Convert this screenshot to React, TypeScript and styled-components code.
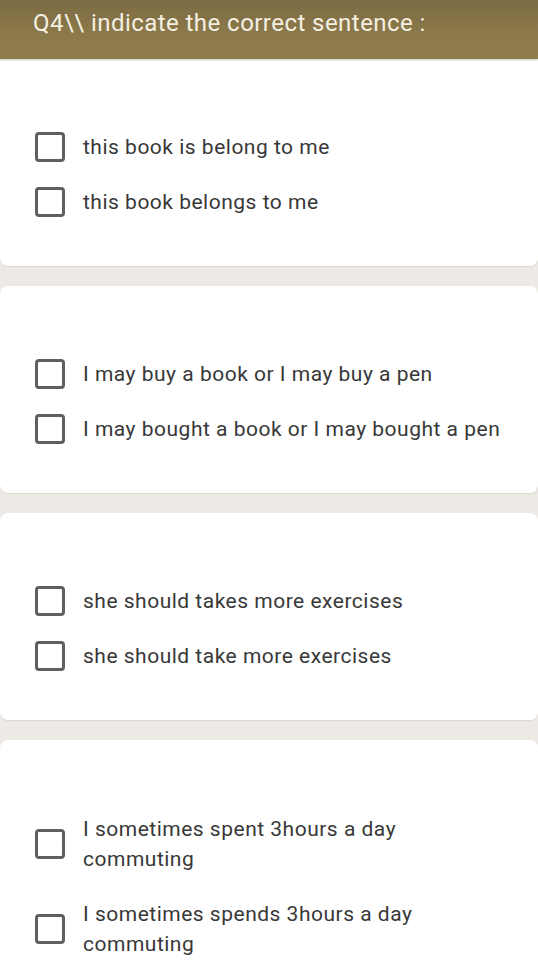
import React from 'react';
import styled, { createGlobalStyle } from 'styled-components';

const GlobalStyle = createGlobalStyle`
  html, body {
    margin: 0;
    padding: 0;
    background: #ede9e4;
    font-family: Roboto, 'Liberation Sans', sans-serif;
  }
`;

const Page = styled.div`
  width: 538px;
  height: 970px;
  overflow: hidden;
  display: flex;
  flex-direction: column;
  gap: 20px;
  background: #ede9e4;
`;

const Header = styled.div`
  height: 59px;
  flex-shrink: 0;
  box-sizing: border-box;
  padding: 8px 33px 0;
  background: linear-gradient(180deg, #7c6b43 0%, #8c7a4b 60%, #8f7d4d 100%);
  color: #f4f0e2;
  font-size: 24px;
  line-height: 30px;
  letter-spacing: 0.45px;
  box-shadow: 0 1px 2px rgba(0, 0, 0, 0.25);
  position: relative;
  z-index: 1;
  margin-bottom: -20px;
`;

const Card = styled.div<{ $tall?: boolean }>`
  background: #ffffff;
  border-radius: 8px;
  box-shadow: 0 1px 1px rgba(0, 0, 0, 0.08);
  padding: ${(p) => (p.$tall ? '74px 0 40px' : '73px 0 49px')};
  display: flex;
  flex-direction: column;
  gap: 25px;
  flex-shrink: 0;

  &:nth-child(2) {
    border-radius: 0 0 8px 8px;
  }
`;

const Option = styled.label`
  display: flex;
  align-items: center;
  padding-left: 35px;
`;

const Box = styled.span`
  width: 30px;
  height: 30px;
  box-sizing: border-box;
  border: 3px solid #5f5f5f;
  border-radius: 4px;
  flex-shrink: 0;
  margin-right: 18px;
`;

const Text = styled.span`
  max-width: 425px;
  font-size: 21px;
  line-height: 30px;
  color: #383838;
  letter-spacing: 0.5px;
`;

const questions: string[][] = [
  ['this book is belong to me', 'this book belongs to me'],
  ['I may buy a book or I may buy a pen', 'I may bought a book or I may bought a pen'],
  ['she should takes more exercises', 'she should take more exercises'],
  ['I sometimes spent 3hours a day commuting', 'I sometimes spends 3hours a day commuting'],
];

export default function App() {
  return (
    <>
      <GlobalStyle />
      <Page>
        <Header>Q4\\ indicate the correct sentence :</Header>
        {questions.map((opts, i) => (
          <Card key={i} $tall={i === 3}>
            {opts.map((o) => (
              <Option key={o}>
                <Box />
                <Text>{o}</Text>
              </Option>
            ))}
          </Card>
        ))}
      </Page>
    </>
  );
}
